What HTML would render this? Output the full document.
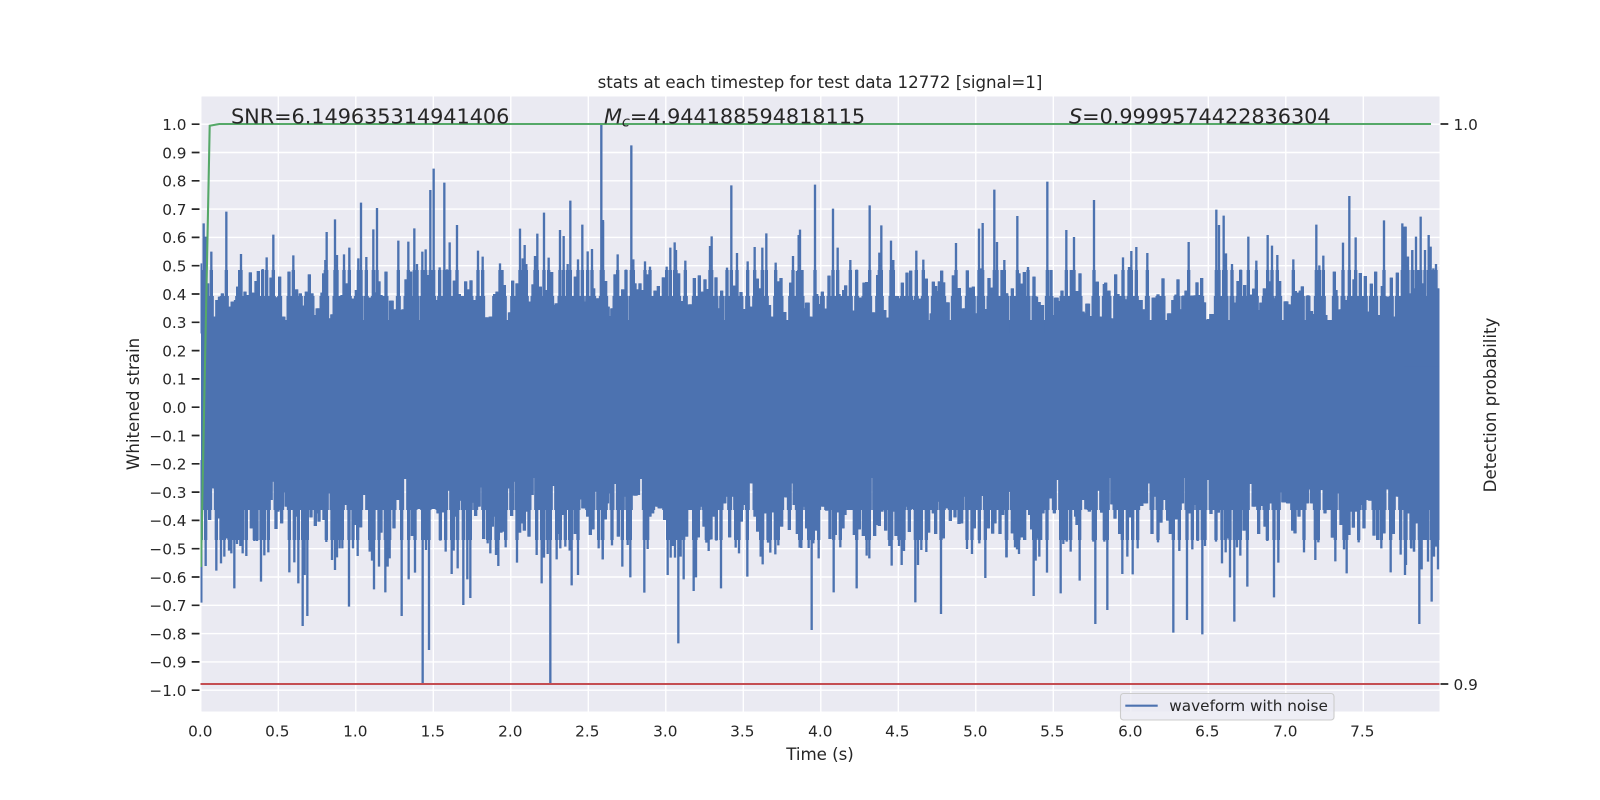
<!DOCTYPE html>
<html lang="en">
<head>
<meta charset="utf-8">
<title>stats at each timestep</title>
<style>
html,body{margin:0;padding:0;background:#fff;width:1600px;height:800px;overflow:hidden}
svg{display:block}
text{font-family:"DejaVu Sans","Liberation Sans",sans-serif;fill:#262626}
.t{font-size:15.28px}
.e{text-anchor:end}
.m{text-anchor:middle}
.l{font-size:16.67px;text-anchor:middle;letter-spacing:-.02px}
.a{font-size:20.83px;letter-spacing:-.05px}
</style>
</head>
<body>
<svg width="1600" height="800" viewBox="0 0 1600 800" xmlns="http://www.w3.org/2000/svg">
<defs>
<clipPath id="ax"><rect x="200.5" y="96.5" width="1239" height="615"/></clipPath>
<clipPath id="mid"><rect x="200.5" y="270" width="1239" height="270"/></clipPath>
<clipPath id="inner"><rect x="200.5" y="296" width="1239" height="214"/></clipPath>
<g id="w" fill="none" stroke="#4c72b0">
<path transform="translate(197,120) scale(.33333)" d="M12 430V640M20 310V640M25 350V640M32 490V640M43 395V640M55 590V640M62 540V640M70 530V640M76 520V640M88 275V640M102 560V640M108 545V640M118 540V640M122 500V640M132 402V640M128 450V640M144 515V640M150 525V640M160 457V640M167 518V640M177 483V640M184 453V640M197 447V640M209 412V640M215 550V640M222 473V640M229 344V640M240 532V640M248 470V640M258 590V640M270 600V640M276 455V640M283 590V640M289 406V640M299 508V640M310 520V640M322 557V640M328 515V640M337 463V640M345 520V640M352 585V640M363 565V640M375 518V640M380 460V640M385 420V640M389 336V640M398 595V640M407 583V640M414 298V640M420 405V640M435 525V640M441 403V640M450 490V640M457 383V640M467 536V640M478 510V640M484 415V640M492 248V640M508 411V640M514 575V640M521 533V640M529 328V640M535 517V640M540 264V640M546 484V640M552 525V640M567 455V640M575 600V640M583 542V640M590 583V640M597 568V640M604 362V640M610 570V640M620 568V640M627 478V640M634 365V640M641 455V640M652 325V640M660 432V640M667 600V640M676 395V640M686 388V640M692 465V640M700 210V640M710 146V640M722 540V640M728 442V640M736 560V640M742 188V640M750 448V640M758 367V640M765 580V640M772 482V640M780 315V640M787 522V640M795 528V640M806 484V640M815 508V640M822 481V640M828 540V640M843 392V640M850 575V640M857 410V640M868 592V640M882 590V640M893 522V640M900 515V640M909 430V640M915 450V640M922 495V640M932 610V640M940 577V640M947 482V640M952 540V640M960 490V640M969 326V640M977 415V640M983 375V640M988 432V640M997 545V640M1008 493V640M1014 408V640M1021 341V640M1030 500V640M1041 278V640M1049 510V640M1055 413V640M1064 456V640M1073 555V640M1080 550V640M1089 330V640M1100 348V640M1112 432V640M1120 242V640M1135 470V640M1143 418V640M1149 540V640M1156 314V640M1165 545V640M1172 394V640M1178 570V640M1185 387V640M1190 505V640M1202 535V640M1213 15V640M1218 300V640M1226 483V640"/>
<path transform="translate(600,120) scale(.33333)" d="M9 305V640M16 483V640M22 560V640M32 588V640M38 565V640M45 463V640M53 403V640M60 546V640M68 508V640M78 449V640M94 76V640M100 418V640M105 490V640M112 508V640M120 490V640M128 510V640M135 424V640M140 463V640M150 440V640M157 540V640M165 512V640M175 498V640M183 595V640M190 472V640M200 440V640M205 590V640M211 383V640M217 600V640M224 367V640M228 390V640M236 460V640M240 590V640M250 543V640M256 422V640M264 580V640M271 553V640M283 474V640M290 538V640M298 466V640M308 515V640M315 478V640M321 507V640M330 378V640M335 349V640M341 600V640M348 472V640M357 565V640M365 512V640M375 612V640M381 443V640M394 196V640M402 497V640M411 399V640M423 516V640M428 585V640M435 567V640M443 424V640M450 560V640M464 381V640M472 476V640M480 505V640M487 383V640M493 575V640M499 340V640M506 555V640M513 590V640M527 428V640M536 484V640M543 474V640M552 576V640M572 488V640M579 408V640M585 556V640M592 453V640M596 345V640M600 329V640M606 450V640M615 565V640M622 548V640M630 590V640M645 194V640M650 522V640M658 552V640M667 515V640M676 566V640M687 467V640M692 548V640M699 266V640M706 600V640M713 383V640M717 522V640M731 510V640M737 496V640M745 530V640M751 420V640M762 572V640M770 449V640M775 567V640M783 533V640M792 488V640M800 486V640M809 256V640M814 590V640M820 577V640M833 465V640M838 398V640M844 316V640M852 570V640M865 593V640M873 362V640M880 420V640M890 528V640M897 535V640M907 488V640M914 543V640M921 458V640M932 452V640M939 540V640M949 392V640M957 587V640M964 536V640M970 419V640M979 476V640M996 580V640M1000 485V640M1007 498V640M1011 513V640M1018 484V640M1025 452V640M1031 487V640M1042 547V640M1052 620V640M1060 466V640M1068 369V640M1078 504V640M1093 565V640M1102 451V640M1110 503V640M1120 500V640M1128 593V640M1131 580V640M1137 326V640M1142 445V640M1148 309V640M1160 567V640M1167 474V640M1176 503V640M1183 209V640M1191 366V640M1200 548V640M1206 450V640M1213 420V640M1220 520V640"/>
<path transform="translate(1005,120) scale(.33333)" d="M5 520V640M22 505V640M32 612V640M37 288V640M42 460V640M50 491V640M58 456V640M69 441V640M75 605V640M87 470V640M92 530V640M100 546V640M110 555V640M127 185V640M133 530V640M138 450V640M143 585V640M154 533V640M162 543V640M171 512V640M180 530V640M184 330V640M192 588V640M199 450V640M207 351V640M215 513V640M225 460V640M232 575V640M242 580V640M248 551V640M257 588V640M267 240V640M277 485V640M285 590V640M298 492V640M302 488V640M312 512V640M318 595V640M332 463V640M339 522V640M354 412V640M360 538V640M372 441V640M379 393V640M385 562V640M394 381V640M402 590V640M406 540V640M417 568V640M427 399V640M437 608V640M447 533V640M452 590V640M459 523V640M474 475V640M483 620V640M493 580V640M506 540V640M513 524V640M519 478V640M527 568V640M536 527V640M543 512V640M551 366V640M561 527V640M570 526V640M576 487V640M582 525V640M590 474V640M596 547V640M612 597V640M620 582V640M634 269V640M642 315V640M656 287V640M663 400V640M670 600V640M681 432V640M690 548V640M699 483V640M707 449V640M719 495V640M725 538V640M730 350V640M738 524V640M746 506V640M754 422V640M762 570V640M770 548V640M778 505V640M788 345V640M795 484V640M801 377V640M807 535V640M817 405V640M824 483V640M835 607V640M843 544V640M850 553V640M865 418V640M871 513V640M880 518V640M886 512V640M892 499V640M909 526V640M917 573V640M927 582V640M934 314V640M943 436V640M955 407V640M960 585V640M973 608V640M988 455V640M993 510V640M1000 570V640M1008 568V640M1014 368V640M1020 540V640M1033 228V640M1040 540V640M1047 478V640M1052 352V640M1058 530V640M1066 459V640M1075 540V640M1081 468V640M1090 575V640M1099 491V640M1105 565V640M1112 455V640M1120 585V640M1132 498V640M1137 301V640M1146 530V640M1152 575V640M1159 473V640M1167 590V640M1177 458V640M1185 610V640M1192 310V640M1199 320V640M1208 410V640M1215 520V640M1222 392V640M1228 505V640"/>
<path transform="translate(1405,200) scale(.33333)" d="M2 80V500M9 170V500M15 290V500M22 150V500M33 110V500M38 210V500M47 50V500M53 250V500M60 150V500M71 105V500M77 140V500M85 205V500M93 192V500M99 265V500M3 1095V800M10 915V800M18 1045V800M27 1055V800M33 970V800M43 1272V800M50 1108V800M60 1020V800M69 1085V800M80 1205V800M87 1070V800M94 1040V800M99 1108V800"/>
<path transform="translate(197,460) scale(.33333)" d="M13 428V0M26 318V0M32 135V0M38 180V0M52 85V0M58 332V0M64 175V0M72 310V0M76 125V0M82 290V0M88 235V0M96 272V0M103 280V0M112 385V0M120 252V0M126 145V0M130 258V0M137 280V0M143 120V0M148 288V0M155 85V0M163 205V0M172 243V0M180 243V0M185 150V0M192 365V0M202 286V0M207 105V0M214 277V0M220 120V0M228 65V0M237 207V0M243 155V0M250 70V0M254 190V0M262 97V0M270 140V0M277 337V0M285 140V0M292 307V0M298 170V0M304 370V0M317 498V0M323 345V0M331 468V0M338 145V0M342 172V0M349 92V0M355 198V0M360 160V0M366 185V0M375 98V0M381 180V0M388 246V0M395 100V0M405 300V0M414 330V0M420 292V0M428 265V0M436 265V0M441 135V0M448 85V0M456 440V0M462 142V0M468 265V0M475 195V0M482 288V0M491 202V0M498 105V0M507 60V0M512 150V0M518 275V0M525 302V0M531 388V0M538 57V0M546 320V0M552 218V0M557 12V0M565 397V0M572 320V0M578 295V0M585 150V0M591 205V0M598 68V0M605 120V0M614 468V0M623 57V0M635 358V0M642 120V0M646 228V0M654 338V0M660 122V0M668 147V0M677 672V0M687 270V0M696 570V0M702 97V0M708 147V0M716 120V0M723 160V0M730 242V0M738 157V0M746 275V0M752 60V0M757 92V0M764 342V0M770 272V0M775 170V0M782 325V0M790 122V0M799 435V0M805 88V0M811 358V0M820 414V0M828 128V0M836 168V0M844 140V0M850 82V0M860 237V0M866 122V0M872 250V0M880 280V0M886 200V0M892 170V0M897 285V0M904 318V0M912 218V0M920 215V0M926 262V0M935 85V0M944 168V0M951 65V0M960 308V0M968 218V0M975 190V0M982 212V0M988 155V0M996 230V0M1003 105V0M1010 50V0M1019 285V0M1027 122V0M1034 370V0M1041 293V0M1048 110V0M1052 282V0M1060 672V0M1070 78V0M1079 298V0M1086 222V0M1090 265V0M1096 165V0M1105 260V0M1112 65V0M1118 272V0M1124 376V0M1130 112V0M1135 222V0M1143 345V0M1150 118V0M1160 145V0M1165 60V0M1172 170V0M1180 225V0M1188 208V0M1196 95V0M1205 265V0M1217 298V0M1225 178V0"/>
<path transform="translate(600,460) scale(.33333)" d="M8 298V0M14 178V0M20 130V0M28 100V0M36 256V0M42 72V0M55 230V0M67 320V0M76 110V0M83 255V0M91 352V0M97 105V0M106 107V0M113 105V0M120 57V0M133 398V0M143 267V0M150 170V0M158 160V0M172 140V0M180 145V0M186 55V0M194 180V0M203 345V0M212 293V0M218 258V0M225 293V0M235 550V0M242 290V0M251 358V0M260 230V0M268 150V0M281 393V0M288 352V0M295 232V0M305 140V0M312 200V0M319 248V0M326 273V0M333 238V0M342 170V0M349 242V0M355 80V0M363 385V0M372 130V0M380 110V0M389 232V0M397 110V0M407 263V0M417 280V0M424 185V0M430 135V0M433 60V0M442 350V0M450 35V0M456 70V0M465 170V0M473 215V0M482 290V0M488 313V0M495 160V0M504 248V0M511 278V0M518 157V0M526 283V0M535 256V0M545 200V0M553 103V0M560 112V0M568 210V0M577 70V0M585 135V0M592 222V0M599 263V0M604 264V0M612 140V0M620 205V0M626 264V0M635 510V0M640 250V0M650 212V0M656 295V0M663 105V0M670 140V0M680 152V0M690 237V0M701 397V0M706 225V0M712 157V0M721 262V0M729 205V0M735 165V0M743 98V0M750 150V0M763 225V0M770 385V0M778 208V0M790 228V0M800 287V0M808 295V0M816 43V0M824 228V0M832 195V0M838 198V0M846 155V0M857 212V0M868 258V0M875 317V0M882 155V0M888 228V0M897 258V0M905 315V0M912 273V0M920 140V0M928 216V0M938 147V0M946 427V0M954 315V0M964 270V0M970 150V0M979 276V0M986 218V0M992 80V0M1000 160V0M1007 222V0M1014 125V0M1023 462V0M1030 235V0M1037 110V0M1044 145V0M1051 183V0M1060 95V0M1065 172V0M1070 22V0M1077 192V0M1085 190V0M1093 110V0M1101 267V0M1107 135V0M1116 282V0M1123 205V0M1130 97V0M1138 250V0M1145 108V0M1156 354V0M1165 205V0M1178 221V0M1185 190V0M1191 27V0M1200 222V0M1208 165V0M1219 292V0M1226 95V0"/>
<path transform="translate(1005,460) scale(.33333)" d="M5 292V0M12 95V0M22 220V0M30 262V0M36 268V0M42 282V0M50 232V0M59 240V0M66 150V0M74 165V0M80 208V0M86 408V0M92 302V0M97 235V0M103 290V0M107 240V0M114 160V0M121 100V0M126 338V0M133 115V0M141 115V0M148 160V0M155 60V0M167 400V0M175 252V0M185 245V0M190 100V0M197 275V0M205 150V0M212 170V0M216 195V0M224 362V0M231 65V0M236 120V0M245 148V0M253 155V0M260 30V0M265 245V0M271 492V0M280 92V0M290 158V0M298 245V0M307 450V0M316 32V0M323 133V0M330 176V0M335 90V0M344 222V0M352 342V0M358 70V0M367 290V0M375 172V0M383 343V0M390 40V0M398 265V0M408 138V0M415 95V0M422 130V0M430 70V0M441 222V0M449 110V0M459 247V0M468 188V0M478 120V0M488 182V0M496 222V0M505 518V0M514 178V0M523 273V0M530 130V0M537 40V0M546 480V0M553 160V0M562 268V0M570 135V0M578 243V0M592 523V0M600 258V0M607 60V0M618 162V0M625 90V0M633 245V0M640 158V0M651 310V0M662 277V0M668 235V0M675 352V0M688 485V0M696 262V0M706 287V0M717 212V0M727 380V0M738 72V0M747 140V0M753 135V0M761 222V0M770 138V0M780 200V0M787 243V0M795 130V0M807 412V0M820 308V0M828 97V0M836 127V0M850 130V0M863 212V0M870 220V0M882 170V0M890 85V0M897 277V0M905 130V0M914 88V0M922 130V0M931 300V0M940 247V0M950 90V0M960 160V0M970 150V0M982 233V0M991 304V0M1000 100V0M1008 195V0M1017 268V0M1025 340V0M1032 225V0M1040 155V0M1045 203V0M1052 155V0M1061 247V0M1069 135V0M1077 205V0M1085 120V0M1096 122V0M1107 227V0M1118 240V0M1129 265V0M1137 220V0M1147 88V0M1157 337V0M1165 222V0M1172 90V0M1180 110V0M1187 284V0M1193 138V0M1200 345V0M1210 160V0M1219 265V0M1227 275V0"/>
</g>
</defs>
<rect x="200.5" y="96.5" width="1239" height="615" fill="#eaeaf2"/>
<path fill="none" stroke="#fff" stroke-width="1.4" d="M200.8 96.5V711.5M278.3 96.5V711.5M355.8 96.5V711.5M433.3 96.5V711.5M510.8 96.5V711.5M588.3 96.5V711.5M665.8 96.5V711.5M743.3 96.5V711.5M820.8 96.5V711.5M898.3 96.5V711.5M975.8 96.5V711.5M1053.3 96.5V711.5M1130.8 96.5V711.5M1208.3 96.5V711.5M1285.8 96.5V711.5M1363.3 96.5V711.5M200.5 124.2H1439.5M200.5 152.5H1439.5M200.5 180.8H1439.5M200.5 209.1H1439.5M200.5 237.4H1439.5M200.5 265.7H1439.5M200.5 294H1439.5M200.5 322.3H1439.5M200.5 350.6H1439.5M200.5 378.9H1439.5M200.5 407.2H1439.5M200.5 435.5H1439.5M200.5 463.8H1439.5M200.5 492.1H1439.5M200.5 520.4H1439.5M200.5 548.7H1439.5M200.5 577H1439.5M200.5 605.3H1439.5M200.5 633.6H1439.5M200.5 661.9H1439.5M200.5 690.2H1439.5"/>
<g clip-path="url(#ax)">
<rect x="201" y="320" width="1238.5" height="158" fill="#4c72b0"/>
<use href="#w" stroke-width="7"/>
<g clip-path="url(#mid)"><use href="#w" stroke-width="10"/></g>
<g clip-path="url(#inner)"><use href="#w" stroke-width="15"/></g>
<path d="M200.5 684H1439.5" stroke="#c44e52" stroke-width="2.08" fill="none"/>
<path d="M201 567L209.7 125.7L219.3 124H1431" stroke="#55a868" stroke-width="2.08" fill="none"/>
</g>
<path d="M191.7 124.2H199.5M191.7 152.5H199.5M191.7 180.8H199.5M191.7 209.1H199.5M191.7 237.4H199.5M191.7 265.7H199.5M191.7 294H199.5M191.7 322.3H199.5M191.7 350.6H199.5M191.7 378.9H199.5M191.7 407.2H199.5M191.7 435.5H199.5M191.7 463.8H199.5M191.7 492.1H199.5M191.7 520.4H199.5M191.7 548.7H199.5M191.7 577H199.5M191.7 605.3H199.5M191.7 633.6H199.5M191.7 661.9H199.5M191.7 690.2H199.5M1440.5 124H1448.3M1440.5 684H1448.3" stroke="#262626" stroke-width="1.7" fill="none"/>
<g class="t">
<text class="t e" x="186.5" y="130">1.0</text>
<text class="t e" x="186.5" y="158.3">0.9</text>
<text class="t e" x="186.5" y="186.6">0.8</text>
<text class="t e" x="186.5" y="214.9">0.7</text>
<text class="t e" x="186.5" y="243.2">0.6</text>
<text class="t e" x="186.5" y="271.5">0.5</text>
<text class="t e" x="186.5" y="299.8">0.4</text>
<text class="t e" x="186.5" y="328.1">0.3</text>
<text class="t e" x="186.5" y="356.4">0.2</text>
<text class="t e" x="186.5" y="384.7">0.1</text>
<text class="t e" x="186.5" y="413">0.0</text>
<text class="t e" x="186.5" y="441.3">−0.1</text>
<text class="t e" x="186.5" y="469.6">−0.2</text>
<text class="t e" x="186.5" y="497.9">−0.3</text>
<text class="t e" x="186.5" y="526.2">−0.4</text>
<text class="t e" x="186.5" y="554.5">−0.5</text>
<text class="t e" x="186.5" y="582.8">−0.6</text>
<text class="t e" x="186.5" y="611.1">−0.7</text>
<text class="t e" x="186.5" y="639.4">−0.8</text>
<text class="t e" x="186.5" y="667.7">−0.9</text>
<text class="t e" x="186.5" y="696">−1.0</text>
<text class="t m" x="200.3" y="736.7">0.0</text>
<text class="t m" x="277.3" y="736.7">0.5</text>
<text class="t m" x="355.3" y="736.7">1.0</text>
<text class="t m" x="432.8" y="736.7">1.5</text>
<text class="t m" x="510.3" y="736.7">2.0</text>
<text class="t m" x="587.3" y="736.7">2.5</text>
<text class="t m" x="665.3" y="736.7">3.0</text>
<text class="t m" x="742.3" y="736.7">3.5</text>
<text class="t m" x="820.3" y="736.7">4.0</text>
<text class="t m" x="897.3" y="736.7">4.5</text>
<text class="t m" x="975.3" y="736.7">5.0</text>
<text class="t m" x="1052.3" y="736.7">5.5</text>
<text class="t m" x="1130.3" y="736.7">6.0</text>
<text class="t m" x="1207.3" y="736.7">6.5</text>
<text class="t m" x="1285.3" y="736.7">7.0</text>
<text class="t m" x="1362.3" y="736.7">7.5</text>
<text class="t" x="1453.5" y="130">1.0</text>
<text class="t" x="1453.5" y="690">0.9</text>
</g>
<text class="l" x="820" y="88">stats at each timestep for test data 12772 [signal=1]</text>
<text class="l" x="820" y="760">Time (s)</text>
<text class="l" transform="translate(139,404) rotate(-90)">Whitened strain</text>
<text class="l" transform="translate(1496,405) rotate(-90)">Detection probability</text>
<text class="a" x="231" y="123.3">SNR=6.149635314941406</text>
<text class="a" x="604" y="123.3"><tspan font-style="italic">M</tspan><tspan font-style="italic" font-size="14.6" dy="3">c</tspan><tspan dy="-3">=4.944188594818115</tspan></text>
<text class="a" x="1069" y="123.3"><tspan font-style="italic">S</tspan>=0.9999574422836304</text>
<rect x="1120.5" y="693.5" width="213.5" height="26.5" rx="3" ry="3" fill="#eaeaf2" fill-opacity=".8" stroke="#cccccc" stroke-width="1.1"/>
<path d="M1125.3 705.7H1157.7" stroke="#4c72b0" stroke-width="2.08" fill="none"/>
<text class="t" x="1169.3" y="711">waveform with noise</text>
</svg>
</body>
</html>
